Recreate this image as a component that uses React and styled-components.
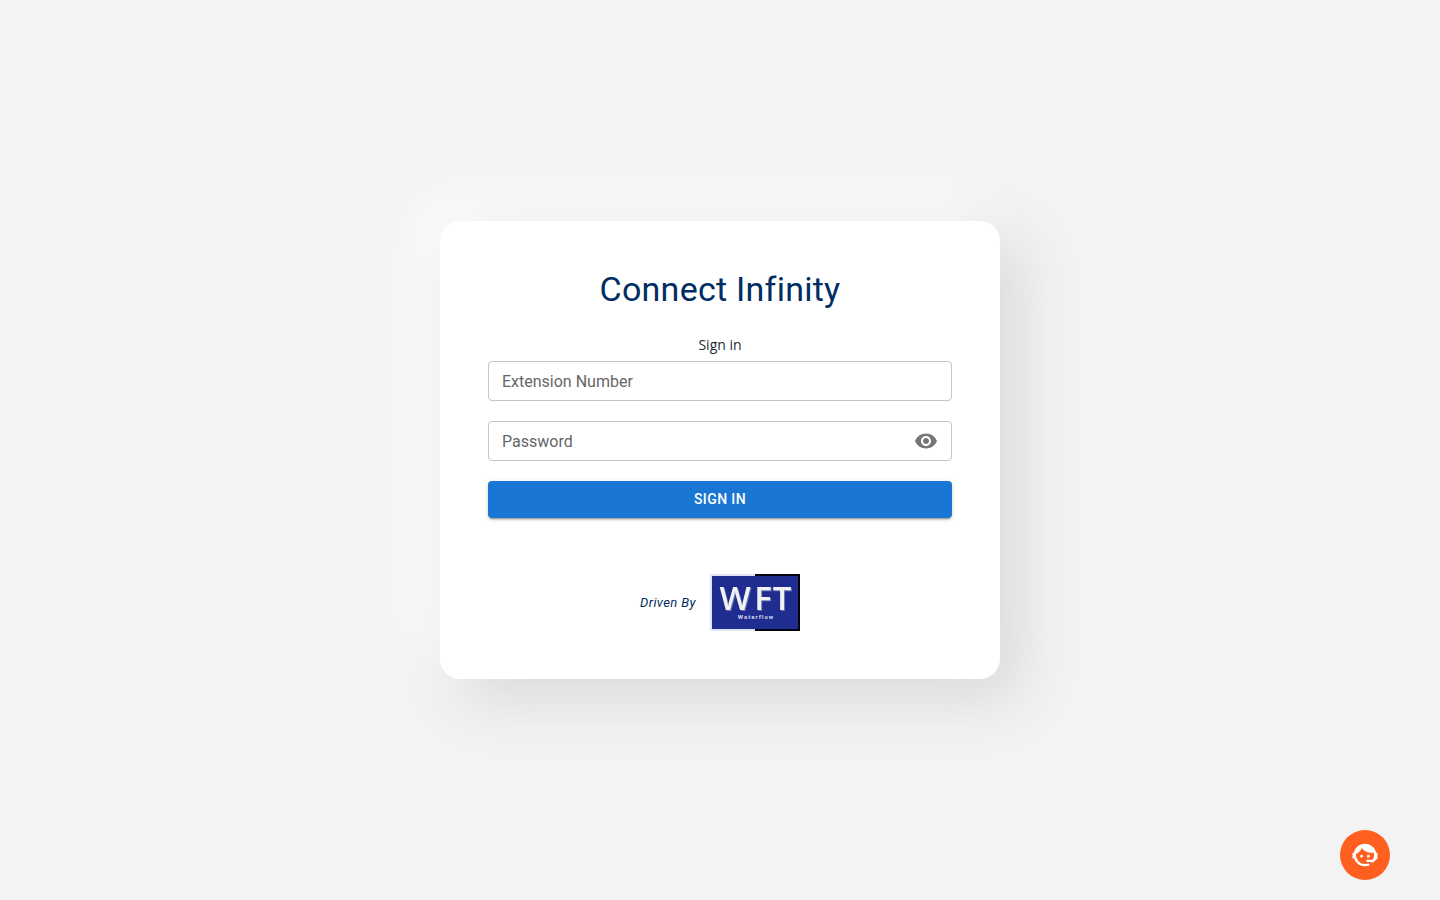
import React, { useState } from "react";
import styled, { createGlobalStyle } from "styled-components";
import { MdVisibility, MdVisibilityOff } from "react-icons/md";

const GlobalStyle = createGlobalStyle`
  *, *::before, *::after { box-sizing: border-box; }
  body {
    margin: 0;
    background: #f3f3f3;
    font-family: Roboto, "Liberation Sans", sans-serif;
  }
`;

const Page = styled.main`
  min-height: 100vh;
  display: flex;
  align-items: center;
  justify-content: center;
  padding: 20px;
`;

const Card = styled.section`
  width: 100%;
  max-width: 560px;
  padding: 48px;
  border-radius: 20px;
  background: #fff;
  box-shadow: 20px 20px 60px #d9d9d9, -20px -20px 60px #fff;
`;

const Title = styled.h1`
  margin: 0 0 26px;
  font-size: 34px;
  line-height: 40px;
  font-weight: 400;
  letter-spacing: 0.00735em;
  text-align: center;
  color: #002d62;
`;

const Subtitle = styled.h2`
  margin: 0 0 6px;
  font-family: "Open Sans", "Noto Sans", sans-serif;
  font-size: 14px;
  line-height: 20px;
  font-weight: 400;
  text-align: center;
  color: #212b36;
`;

const Form = styled.form`
  display: flex;
  flex-direction: column;
  gap: 20px;
`;

const Field = styled.div`
  position: relative;
  display: flex;
  align-items: center;
  height: 40px;
  padding: 0 13px;
  border: 1px solid #c4c4c4;
  border-radius: 4px;

  &:focus-within { border-color: #1976d2; }
`;

const Label = styled.label`
  position: absolute;
  left: 13px;
  top: 8px;
  font-size: 16px;
  line-height: 24px;
  color: #666;
  pointer-events: none;
`;

const Input = styled.input`
  flex: 1;
  min-width: 0;
  height: 100%;
  padding: 0;
  border: 0;
  outline: 0;
  background: transparent;
  font: inherit;
  font-size: 16px;
  color: #212121;

  &:focus + label,
  &:not(:placeholder-shown) + label {
    top: -10px;
    padding: 0 4px;
    background: #fff;
    font-size: 12px;
    line-height: 20px;
  }
`;

const IconButton = styled.button`
  display: flex;
  padding: 0;
  border: 0;
  background: none;
  font-size: 24px;
  color: #757575;
  cursor: pointer;
`;

const SubmitButton = styled.button`
  padding: 6px 16px 7px;
  border: 0;
  border-radius: 4px;
  background: #1976d2;
  color: #fff;
  font-family: inherit;
  font-size: 14px;
  line-height: 24px;
  font-weight: 500;
  letter-spacing: 0.02857em;
  text-transform: uppercase;
  cursor: pointer;
  box-shadow: 0 3px 1px -2px rgba(0, 0, 0, 0.2), 0 2px 2px rgba(0, 0, 0, 0.14),
    0 1px 5px rgba(0, 0, 0, 0.12);
`;

const Credits = styled.footer`
  display: flex;
  align-items: center;
  justify-content: center;
  gap: 14px;
  margin-top: 56px;
  font-size: 13px;
  line-height: 20px;
  font-style: italic;
  letter-spacing: 0.03em;
  color: #002d62;
`;

const LogoSvg = styled.svg`
  display: block;
  width: 90px;
  height: 57px;
  font-style: normal;
  text-anchor: middle;
`;

const LogoLetters = styled.g`
  font-family: "Open Sans", sans-serif;
  font-weight: 600;
  font-size: 33px;
  letter-spacing: 0;
  filter: drop-shadow(1px 1px 0 #6670b0);
`;

const LogoCaption = styled.text`
  font-family: Roboto, sans-serif;
  font-weight: 700;
  font-size: 6px;
  letter-spacing: 1px;
`;

const SupportButton = styled.button`
  position: fixed;
  right: 50px;
  bottom: 20px;
  width: 50px;
  height: 50px;
  display: flex;
  align-items: center;
  justify-content: center;
  padding: 0;
  border: 0;
  border-radius: 50%;
  background: #ff5f1f;
  color: #fff;
  cursor: pointer;
`;

function WaterflowLogo() {
  return (
    <LogoSvg viewBox="0 0 90 57" role="img" aria-label="WFT Waterflow">
      <rect width="46" height="57" fill="#e1e5f3" />
      <rect x="45" width="45" height="57" fill="#04040e" />
      <rect x="2" y="2" width="86" height="53" fill="#1f2c90" />
      <LogoLetters fill="#f1f2f4">
        <text x="25" y="36">W</text>
        <text x="53" y="36">F</text>
        <text x="72" y="36">T</text>
      </LogoLetters>
      <LogoCaption x="46" y="45" fill="#d8dbee">Waterflow</LogoCaption>
    </LogoSvg>
  );
}

function AgentIcon() {
  return (
    <svg width="30" height="30" viewBox="0 0 24 24" fill="currentColor" aria-hidden="true">
      <path d="M18.72,14.76C19.07,13.91 19.26,13 19.26,12C19.26,11.28 19.15,10.59 18.96,9.95C18.31,10.1 17.63,10.18 16.92,10.18C13.86,10.18 11.15,8.67 9.5,6.34C8.61,8.5 6.91,10.26 4.77,11.22C4.73,11.47 4.73,11.74 4.73,12A7.27,7.27 0 0,0 12,19.27C13.05,19.27 14.06,19.04 14.97,18.63C15.54,19.72 15.8,20.26 15.78,20.26C14.14,20.81 12.87,21.08 12,21.08C9.58,21.08 7.27,20.13 5.57,18.42C4.53,17.38 3.76,16.11 3.33,14.73H2V10.18H3.09C3.93,6.04 7.6,2.92 12,2.92C14.4,2.92 16.71,3.87 18.42,5.58C19.69,6.84 20.54,8.45 20.89,10.18H22V14.67H22V14.69L22,14.73H21.94L18.38,18L13.08,17.4V15.73H17.91L18.72,14.76M9.27,11.77C9.57,11.77 9.86,11.89 10.07,12.11C10.28,12.32 10.4,12.61 10.4,12.91C10.4,13.21 10.28,13.5 10.07,13.71C9.86,13.92 9.57,14.04 9.27,14.04C8.64,14.04 8.13,13.54 8.13,12.91C8.13,12.28 8.64,11.77 9.27,11.77M14.72,11.77C15.35,11.77 15.85,12.28 15.85,12.91C15.85,13.54 15.35,14.04 14.72,14.04C14.09,14.04 13.58,13.54 13.58,12.91A1.14,1.14 0 0,1 14.72,11.77Z" />
    </svg>
  );
}

export default function App() {
  const [visible, setVisible] = useState(false);

  return (
    <>
      <GlobalStyle />
      <Page>
        <Card>
          <Title>Connect Infinity</Title>
          <Subtitle>Sign in</Subtitle>
          <Form onSubmit={(event) => event.preventDefault()}>
            <Field>
              <Input id="extension" type="text" placeholder=" " />
              <Label htmlFor="extension">Extension Number</Label>
            </Field>
            <Field>
              <Input id="password" type={visible ? "text" : "password"} placeholder=" " />
              <Label htmlFor="password">Password</Label>
              <IconButton
                type="button"
                aria-label="Toggle password visibility"
                onClick={() => setVisible(!visible)}
              >
                {visible ? <MdVisibilityOff /> : <MdVisibility />}
              </IconButton>
            </Field>
            <SubmitButton type="submit">Sign in</SubmitButton>
          </Form>
          <Credits>
            <span>Driven By</span>
            <WaterflowLogo />
          </Credits>
        </Card>
      </Page>
      <SupportButton type="button" aria-label="Support">
        <AgentIcon />
      </SupportButton>
    </>
  );
}
